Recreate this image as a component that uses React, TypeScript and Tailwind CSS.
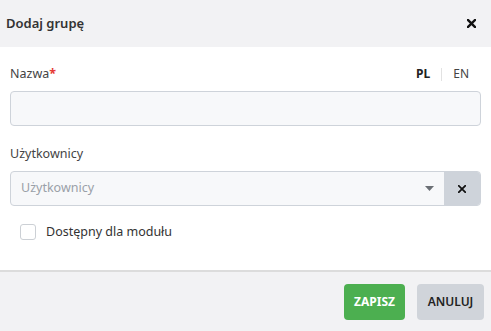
const font = { fontFamily: '"Noto Sans", "Open Sans", sans-serif' };

const XIcon = ({ size = 10, stroke = 2.4 }: { size?: number; stroke?: number }) => (
  <svg width={size} height={size} viewBox="0 0 10 10" fill="none">
    <path d="M1 1L9 9M9 1L1 9" stroke="#111" strokeWidth={stroke} strokeLinecap="square" />
  </svg>
);

export default function App() {
  return (
    <div className="w-[491px] h-[331px] flex flex-col bg-white text-[12.5px] text-[#333]" style={font}>
      <div className="h-[47px] bg-[#f2f2f4] flex items-center justify-between pl-[6px] pr-[15px]">
        <span className="font-semibold text-[#333] text-[13px]">Dodaj grupę</span>
        <XIcon size={9} stroke={2.6} />
      </div>

      <div className="flex-1 px-[10px] pt-[18px] border-b-[2px] border-[#dcdcdc]">
        <div className="flex items-center justify-between h-[18px]">
          <span className="text-[#444]">
            Nazwa<span className="text-[#e53935] font-bold">*</span>
          </span>
          <div className="flex items-center text-[12px] pr-[12px]">
            <span className="font-bold text-[#222]">PL</span>
            <span className="mx-[11px] h-[13px] w-px bg-[#e2e2e2]" />
            <span className="text-[#444]">EN</span>
          </div>
        </div>
        <div className="mt-[8px] h-[35px] rounded-[4px] border border-[#ced3da] bg-[#f7f8fa]" />

        <div className="mt-[19px] h-[18px] flex items-center text-[#444]">Użytkownicy</div>
        <div className="mt-[8px] h-[35px] flex rounded-[4px] border border-[#ced3da] bg-[#f7f8fa] overflow-hidden">
          <div className="flex-1 flex items-center justify-between pl-[10px] pr-[10px]">
            <span className="text-[#9aa0a8]">Użytkownicy</span>
            <svg width="9" height="5" viewBox="0 0 9 5">
              <path d="M0 0H9L4.5 5Z" fill="#6b6f75" />
            </svg>
          </div>
          <div className="w-[36px] bg-[#ced3da] flex items-center justify-center">
            <XIcon size={8} stroke={2.2} />
          </div>
        </div>

        <div className="mt-[17px] ml-[10px] flex items-center gap-[10px]">
          <div className="w-[16px] h-[16px] rounded-[3px] border border-[#ccd0d5] bg-white" />
          <span className="text-[#333]">Dostępny dla modułu</span>
        </div>
      </div>

      <div className="h-[59px] bg-[#f2f2f4] flex items-center justify-end gap-[12px] pr-[7px]">
        <button className="h-[36px] w-[61px] rounded-[4px] bg-[#4caf50] text-white font-bold text-[12px]">
          ZAPISZ
        </button>
        <button className="h-[36px] w-[67px] rounded-[4px] bg-[#d0d4da] text-[#222] font-semibold text-[12px]">
          ANULUJ
        </button>
      </div>
    </div>
  );
}
